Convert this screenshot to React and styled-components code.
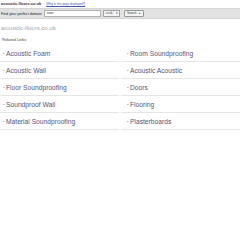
import React from "react";
import styled, { createGlobalStyle } from "styled-components";

const Global = createGlobalStyle`
  html, body { margin: 0; padding: 0; background: #fff; }
  body { font-family: "Liberation Sans", Arial, sans-serif; }
`;

const TopLine = styled.div`
  display: flex;
  align-items: baseline;
  gap: 5px;
  height: 8px;
  padding: 0 0 0 1px;
  line-height: 7px;
`;
const DomainBold = styled.span`
  font-weight: bold;
  font-size: 4px;
  color: #333;
`;
const WhyLink = styled.a`
  font-size: 3px;
  color: #4455aa;
  text-decoration: underline;
`;

const SearchBar = styled.div`
  display: flex;
  align-items: center;
  height: 9px;
  padding: 0 1px;
  background: #e2e2e2;
  border-top: 1px solid #d4d4d4;
  border-bottom: 1px solid #d4d4d4;
`;
const Label = styled.span`
  color: #222;
  font-size: 3.7px;
  width: 43px;
  white-space: nowrap;
`;
const Input = styled.div`
  width: 53px;
  height: 5px;
  background: #fff;
  border: 1px solid #b0b0b0;
  font-size: 3px;
  line-height: 5px;
  padding-left: 2px;
  color: #444;
`;
const Select = styled.div`
  width: 13px;
  height: 5px;
  margin-left: 2px;
  background: #f4f4f4;
  border: 1px solid #a0a0a0;
  font-size: 2.8px;
  line-height: 5px;
  padding: 0 1px;
  display: flex;
  justify-content: space-between;
  color: #333;
`;
const Button = styled.div`
  height: 5px;
  width: 14px;
  margin-left: 4px;
  padding: 0 2px;
  background: #f4f4f4;
  border: 1px solid #999;
  border-radius: 1px;
  font-size: 3px;
  line-height: 5px;
  color: #333;
  display: flex;
  justify-content: space-between;
`;

const Title = styled.div`
  padding: 4px 0 0 1px;
  height: 11px;
  line-height: 11px;
  font-size: 6px;
  color: #a6a6ae;
`;
const Related = styled.div`
  padding: 0 0 0 2px;
  height: 11px;
  line-height: 12px;
  font-size: 4px;
  color: #444;
`;

const Grid = styled.div`
  display: grid;
  grid-template-columns: 119px 119px;
  column-gap: 2px;
`;
const LinkCell = styled.div`
  height: 16px;
  border-bottom: 1px solid #e6e6e6;
  display: flex;
  align-items: center;
  padding-left: ${(p) => (p.$right ? "6px" : "3px")};
  font-size: 6.7px;
  color: #55557a;
`;
const Dot = styled.span`
  font-size: 6px;
  margin-right: 1px;
  color: #666;
  font-weight: bold;
`;

const left = ["Acoustic Foam", "Acoustic Wall", "Floor Soundproofing", "Soundproof Wall", "Material Soundproofing"];
const right = ["Room Soundproofing", "Acoustic Acoustic", "Doors", "Flooring", "Plasterboards"];

export default function App() {
  const cells = [];
  left.forEach((l, i) => {
    cells.push(
      <LinkCell key={"l" + i}><Dot>·</Dot>{l}</LinkCell>
    );
    cells.push(
      <LinkCell key={"r" + i} $right><Dot>·</Dot>{right[i]}</LinkCell>
    );
  });
  return (
    <>
      <Global />
      <TopLine>
        <DomainBold>acoustic-floors.co.uk</DomainBold>
        <WhyLink>[Why is this page displayed?]</WhyLink>
      </TopLine>
      <SearchBar>
        <Label>Find your perfect domain</Label>
        <Input>www</Input>
        <Select><span>.co.uk</span><span>▾</span></Select>
        <Button><span>Search</span><span>▸</span></Button>
      </SearchBar>
      <Title>acoustic-floors.co.uk</Title>
      <Related>Related Links</Related>
      <Grid>{cells}</Grid>
    </>
  );
}
